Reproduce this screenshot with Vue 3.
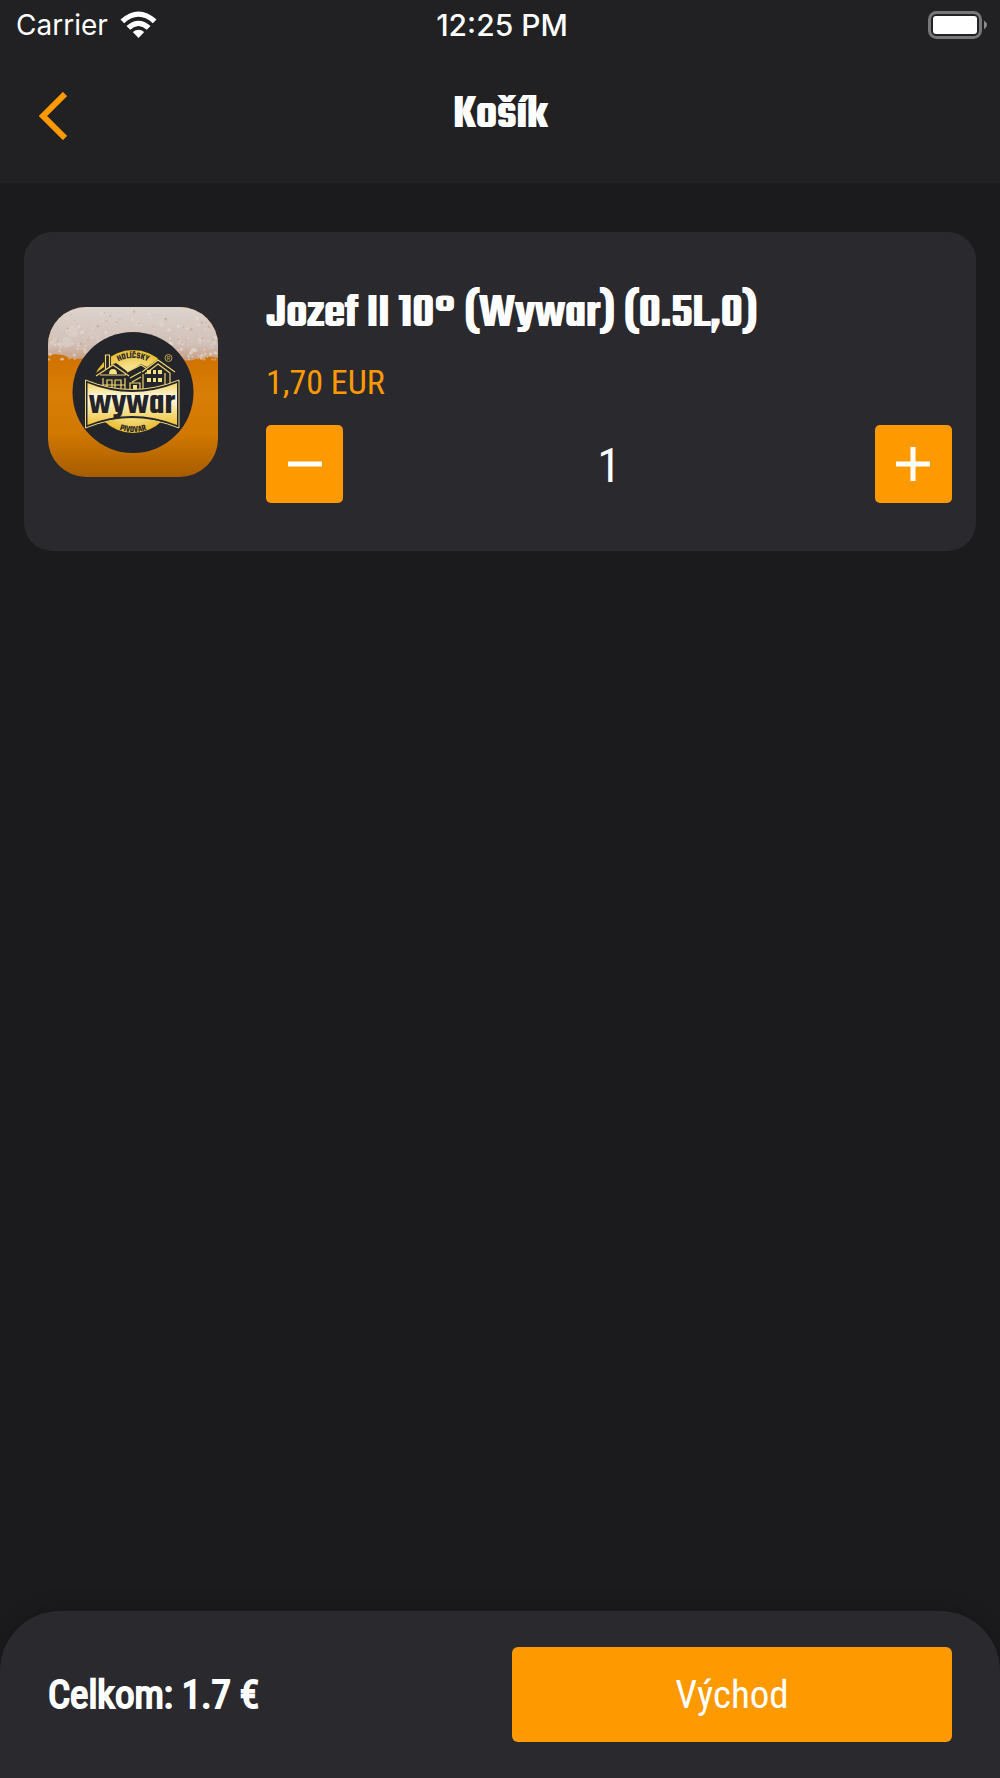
<template>
  <div class="screen">
    <header class="top">
      <div class="status-bar">
        <div class="carrier">
          <span>Carrier</span>
          <svg class="wifi" viewBox="0 0 37 28" aria-hidden="true">
            <path d="M0.500 8.500Q18.500 -7.500 36.500 8.500L32.800 12.200Q18.500 -0.500 4.200 12.200Z" />
            <path d="M6.500 15Q18.500 4.500 30.500 15L26.800 18.700Q18.500 11.500 10.200 18.700Z" />
            <path d="M12.800 21Q18.500 16.500 24.200 21L18.500 27Z" />
          </svg>
        </div>
        <div class="time">12:25 PM</div>
        <svg class="battery" viewBox="0 0 60 28" aria-hidden="true">
          <rect x="1.500" y="1.500" width="51" height="25" rx="7" fill="none" stroke="#77777a" stroke-width="3" />
          <rect x="5" y="5" width="44" height="18" rx="3" fill="#fff" />
          <path d="M56 9.500Q59 11.500 59 14T56 18.500Z" fill="#8a8a8c" />
        </svg>
      </div>
      <div class="nav-bar">
        <button class="back" type="button" aria-label="Späť">
          <svg viewBox="0 0 28 48" aria-hidden="true">
            <path d="M26 2L4 24L26 46" fill="none" stroke="#ff9900" stroke-width="6" />
          </svg>
        </button>
        <h1>Košík</h1>
      </div>
    </header>

    <main class="content">
      <article v-for="item in items" :key="item.id" class="card">
        <svg class="thumb" viewBox="0 0 170 170" role="img" aria-label="Wywar">
          <defs>
            <linearGradient id="beer" x1="0" y1="0" x2="0" y2="1">
              <stop offset="0.28" stop-color="#cf7200" />
              <stop offset="0.52" stop-color="#d97e06" />
              <stop offset="0.75" stop-color="#d07800" />
              <stop offset="1" stop-color="#a65c00" />
            </linearGradient>
            <linearGradient id="foam" x1="0" y1="0" x2="0" y2="1">
              <stop offset="0" stop-color="#ddd4ce" />
              <stop offset="0.7" stop-color="#d1c0b7" />
              <stop offset="1" stop-color="#c79b7c" />
            </linearGradient>
            <radialGradient id="gold">
              <stop offset="0" stop-color="#fff5c8" />
              <stop offset="0.6" stop-color="#f6e08a" />
              <stop offset="1" stop-color="#e9bd2f" />
            </radialGradient>
            <linearGradient id="banner" x1="0" y1="0" x2="0" y2="1">
              <stop offset="0" stop-color="#f3d365" />
              <stop offset="0.35" stop-color="#fffbe6" />
              <stop offset="1" stop-color="#efc337" />
            </linearGradient>
            <path id="arc-top" d="M52 84A33 33 0 0 1 118 84" />
            <path id="arc-bottom" d="M45 85A40 40 0 0 0 125 85" />
          </defs>

          <rect width="170" height="170" fill="url(#beer)" />
          <path d="M0 0H170V51Q158 48 148 52T124 50H40Q28 54 20 50T0 48Z" fill="url(#foam)" />
          <circle v-for="(b, i) in bubbles" :key="i" :cx="b.x" :cy="b.y" :r="b.r" :fill="b.fill" stroke="#eee7e2" stroke-width="0.300" :opacity="b.opacity" />

          <circle cx="85" cy="85.500" r="60.500" fill="#24242b" />
          <circle cx="85" cy="84.500" r="41.500" fill="url(#gold)" />

          <!-- brewery houses -->
          <g fill="#24242b">
            <path d="M56 60V46H63V58L68 56L80 65L93 57L99 60L113 50L129 62V84H45V68Z" />
          </g>
          <g fill="none" stroke="#f1d66d" stroke-width="1.200">
            <path d="M57.500 62V48H61.500V60M48 69L65 58L81 69M52 68H78M79 65L93 58L98 61M94 65L110 53L127 65M97 67L110 57L122 66V84" />
            <path d="M55 71V84M77 71V84M59 84V73H64V84M67 84V73H73V84M55 78H77M82 84V76H92V84M82 71L93 65M84 75L93 70M95 67V84M117 66V84" />
          </g>
          <g fill="#f6df84">
            <path d="M61 67Q61 62 65 62T69 67Z" />
            <rect x="99" y="63" width="4" height="4" />
            <rect x="105" y="63" width="3" height="4" />
            <rect x="110" y="63" width="4" height="4" />
            <rect x="99" y="71" width="4" height="4" />
            <rect x="105" y="71" width="3" height="4" />
            <rect x="110" y="71" width="4" height="4" />
            <rect x="85" y="78" width="4" height="5" />
          </g>

          <path d="M37.500 73Q84 92 131 73V121Q84 102 37.500 121Z" fill="#24242b" stroke="#efd67a" stroke-width="1" />
          <path d="M39.500 76Q84 94 129 76V118Q84 100 39.500 118Z" fill="url(#banner)" />
          <text class="brand" x="84" y="106" text-anchor="middle">wywar</text>
          <text class="ring">
            <textPath href="#arc-top" startOffset="50%" text-anchor="middle">HOLÍČSKY</textPath>
          </text>
          <text class="ring">
            <textPath href="#arc-bottom" startOffset="50%" text-anchor="middle">PIVOVAR</textPath>
          </text>
          <circle cx="120.500" cy="51" r="3.500" fill="none" stroke="#d9bd55" stroke-width="0.800" />
          <text class="mark" x="120.500" y="53" text-anchor="middle">R</text>
        </svg>

        <div class="details">
          <h2>{{ item.name }}</h2>
          <p class="price">{{ item.price }}</p>
          <div class="stepper">
            <button type="button" aria-label="Odobrať" @click="item.count = Math.max(0, item.count - 1)">
              <svg viewBox="0 0 34 34" aria-hidden="true">
                <path d="M0 17H34" />
              </svg>
            </button>
            <output>{{ item.count }}</output>
            <button type="button" aria-label="Pridať" @click="item.count++">
              <svg viewBox="0 0 34 34" aria-hidden="true">
                <path d="M0 17H34M17 0V34" />
              </svg>
            </button>
          </div>
        </div>
      </article>
    </main>

    <footer class="summary">
      <span class="total">Celkom: {{ total }} €</span>
      <button class="checkout" type="button">Východ</button>
    </footer>
  </div>
</template>

<script setup>
import { computed, ref } from 'vue'

const items = ref([
  { id: 1, name: 'Jozef II 10° (Wywar) (0.5L,0)', price: '1,70 EUR', unit: 1.7, count: 1 }
])

const total = computed(() =>
  Number(items.value.reduce((sum, item) => sum + item.unit * item.count, 0).toFixed(2))
)

// foam: bubbles get smaller and denser towards the beer line
const tones = ['#d8cdc6', '#cbb9ae', '#e2dad5', '#c9a48c']
const noise = (n) => Math.abs(Math.sin(n * 12.9898) * 43758.5453) % 1
const bubbles = Array.from({ length: 300 }, (_, i) => {
  const depth = Math.sqrt(noise(i + 1))
  const big = i % 14 === 0 && depth < 0.7
  return {
    x: noise(i + 500) * 170,
    y: depth * 53 + (i % 17 === 0 ? 8 * noise(i + 50) : 0),
    r: big ? 4 + noise(i) * 5 : 0.6 + noise(i + 900) * 1.2,
    fill: tones[i % 4],
    opacity: big ? 0.4 : 0.7
  }
})
</script>

<style>
body {
  margin: 0;
  background: #1b1b1d;
}
</style>

<style scoped>
.screen {
  display: flex;
  flex-direction: column;
  min-height: 100vh;
  background: #1b1b1d;
  color: #fff;
  font-family: "Roboto Condensed", "Liberation Sans Narrow", "Liberation Sans", sans-serif;
}

button {
  border: 0;
  padding: 0;
  color: inherit;
  font: inherit;
  cursor: pointer;
}

.top {
  background: #212123;
}

.status-bar {
  display: grid;
  grid-template-columns: 1fr auto 1fr;
  align-items: center;
  height: 49px;
  padding: 0 12px 0 16px;
  font-family: Inter, sans-serif;
  font-size: 28px;
}

.carrier {
  display: flex;
  align-items: center;
  gap: 12px;
}

.wifi {
  width: 37px;
  height: 28px;
  fill: #fff;
}

.time {
  font-size: 30px;
  font-weight: 500;
}

.battery {
  justify-self: end;
  width: 60px;
  height: 28px;
}

.nav-bar {
  display: grid;
  grid-template-columns: 1fr auto 1fr;
  align-items: center;
  height: 134px;
  padding: 0 24px;
}

.back {
  justify-self: start;
  width: 58px;
  height: 60px;
  background: none;
}

.back svg {
  display: block;
  width: 28px;
  height: 48px;
  margin: 0 auto;
}

h1,
h2 {
  margin: 0;
  font-family: "Teko", "Roboto Condensed", "Liberation Sans Narrow", sans-serif;
  font-size: 48px;
  font-weight: 600;
  line-height: 60px;
  text-shadow: 1px 0 #fff;
}

h2 {
  padding-top: 5px;
}

.content {
  flex: 1;
  padding: 49px 24px;
}

.card {
  display: flex;
  align-items: center;
  gap: 48px;
  padding: 48px 24px;
  border-radius: 28px;
  background: #2a292e;
}

.thumb {
  flex: none;
  width: 170px;
  height: 170px;
  border-radius: 38px;
}

.brand {
  font-family: "Teko", "Liberation Sans Narrow", sans-serif;
  font-size: 36px;
  font-weight: 600;
  fill: #24242b;
}

.ring {
  font-family: "Teko", "Liberation Sans Narrow", sans-serif;
  font-size: 9px;
  font-weight: 600;
  fill: #24242b;
}

.mark {
  font-family: "Liberation Sans", sans-serif;
  font-size: 5px;
  fill: #d9bd55;
}

.details {
  flex: 1;
  min-width: 0;
}

.price {
  margin: 13px 0 19px;
  color: #ff9900;
  font-size: 34px;
  line-height: 48px;
}

.stepper {
  display: flex;
  align-items: center;
  justify-content: space-between;
}

.stepper button {
  display: grid;
  place-items: center;
  width: 77px;
  height: 78px;
  border-radius: 5px;
  background: #ff9900;
}

.stepper svg {
  width: 34px;
  height: 34px;
  fill: none;
  stroke: #fff;
  stroke-width: 5;
}

.stepper output {
  font-size: 48px;
  line-height: 60px;
  padding-top: 3px;
}

.summary {
  display: grid;
  grid-template-columns: 1fr 1fr;
  align-items: center;
  gap: 24px;
  padding: 36px 48px;
  border-radius: 60px 60px 0 0;
  background: #2a292e;
  box-shadow: 0 0 24px rgba(0, 0, 0, 0.2);
  font-size: 39px;
}

.total {
  -webkit-text-stroke: 2px #fff;
}

.checkout {
  height: 95px;
  border-radius: 6px;
  background: #ff9900;
}
</style>
